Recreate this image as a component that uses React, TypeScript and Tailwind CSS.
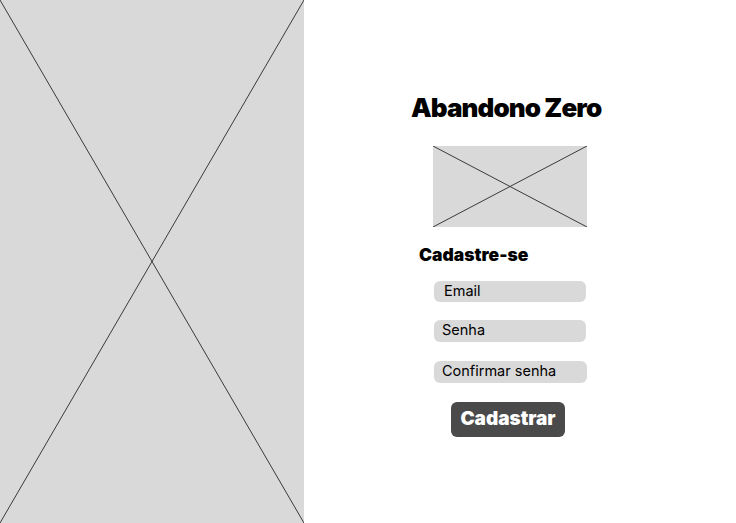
import React from "react";

function XBox({ className }: { className: string }) {
  return (
    <div className={className}>
      <svg width="100%" height="100%" preserveAspectRatio="none" viewBox="0 0 100 100" className="block">
        <line x1="0" y1="0" x2="100" y2="100" stroke="#3a3a3a" strokeWidth="1" vectorEffect="non-scaling-stroke" />
        <line x1="100" y1="0" x2="0" y2="100" stroke="#3a3a3a" strokeWidth="1" vectorEffect="non-scaling-stroke" />
      </svg>
    </div>
  );
}

export default function App() {
  return (
    <div className="flex h-[523px] w-[736px] bg-white" style={{ fontFamily: "Inter, 'Noto Sans', sans-serif" }}>
      <XBox className="h-[523px] w-[304px] shrink-0 bg-[#d9d9d9]" />
      <div className="flex flex-col items-start">
        <h1 className="ml-[107px] mt-[92px] text-[26px] font-black leading-[32px] tracking-[-0.9px] text-black">
          Abandono Zero
        </h1>
        <XBox className="ml-[129px] mt-[22px] h-[81px] w-[154px] bg-[#d9d9d9]" />
        <h2 className="ml-[115px] mt-[17px] text-[17.5px] font-black leading-[22px] text-black">Cadastre-se</h2>
        <div className="ml-[130px] mt-[15px] flex h-[21px] w-[152px] items-center rounded-[6px] bg-[#d9d9d9] pb-[1px] pl-[10px] text-[14.5px] leading-none text-black">
          Email
        </div>
        <div className="ml-[130px] mt-[18px] flex h-[22px] w-[152px] items-center rounded-[6px] bg-[#d9d9d9] pb-[1px] pl-[8px] text-[14.5px] leading-none text-black">
          Senha
        </div>
        <div className="ml-[130px] mt-[19px] flex h-[22px] w-[153px] items-center rounded-[6px] bg-[#d9d9d9] pb-[1px] pl-[8px] text-[14.5px] leading-none text-black">
          Confirmar senha
        </div>
        <button className="ml-[147px] mt-[19px] flex h-[35px] w-[114px] items-center justify-center rounded-[6px] bg-[#4a4a4a] pb-[1px] text-[19px] font-black text-white">
          Cadastrar
        </button>
      </div>
    </div>
  );
}
